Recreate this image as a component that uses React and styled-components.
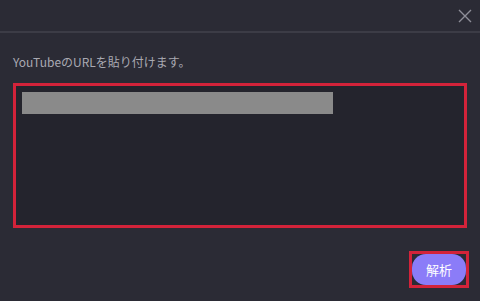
import React from "react";
import styled, { createGlobalStyle } from "styled-components";

const GlobalStyle = createGlobalStyle`
  *, *::before, *::after {
    box-sizing: border-box;
  }
  html, body {
    margin: 0;
    padding: 0;
    background: #2b2b35;
  }
`;

const App = () => {
  return (
    <Dialog>
      <GlobalStyle />
      <Header>
        <CloseButton aria-label="close">
          <svg width="14" height="14" viewBox="0 0 14 14">
            <path d="M1 1L13 13M13 1L1 13" stroke="#8e8e98" strokeWidth="1.4" fill="none" />
          </svg>
        </CloseButton>
      </Header>
      <Body>
        <Label>YouTubeのURLを貼り付けます。</Label>
        <UrlBox>
          <UrlFill />
        </UrlBox>
      </Body>
      <Footer>
        <Highlight>
          <ParseButton>解析</ParseButton>
        </Highlight>
      </Footer>
    </Dialog>
  );
};

export default App;

const Dialog = styled.div`
  width: 480px;
  height: 301px;
  background: #2b2b35;
  display: flex;
  flex-direction: column;
  font-family: "Noto Sans CJK JP", "Noto Sans", sans-serif;
  overflow: hidden;
`;

const Header = styled.div`
  height: 33px;
  border-bottom: 2px solid #3c3c46;
  display: flex;
  justify-content: flex-end;
  align-items: flex-start;
  padding-right: 8px;
`;

const CloseButton = styled.button`
  margin-top: 9px;
  width: 14px;
  height: 14px;
  padding: 0;
  border: none;
  background: none;
  display: flex;
`;

const Body = styled.div`
  padding: 21px 13px 0 13px;
  display: flex;
  flex-direction: column;
`;

const Label = styled.div`
  color: #a9a9b2;
  font-size: 12px;
  line-height: 16px;
`;

const UrlBox = styled.div`
  margin-top: 13px;
  width: 454px;
  height: 145px;
  border: 3px solid #d3233a;
  background: #24242d;
  padding: 6px 0 0 6px;
`;

const UrlFill = styled.div`
  width: 311px;
  height: 22px;
  background: #8a8a8a;
`;

const Footer = styled.div`
  display: flex;
  justify-content: flex-end;
  padding: 23px 11px 0 0;
`;

const Highlight = styled.div`
  border: 3px solid #d3233a;
  display: flex;
`;

const ParseButton = styled.button`
  width: 54px;
  height: 31px;
  border: none;
  border-radius: 14px;
  background: #8b7cf8;
  color: #ffffff;
  font-family: "Noto Sans CJK JP", sans-serif;
  font-size: 13px;
  padding: 0;
`;
